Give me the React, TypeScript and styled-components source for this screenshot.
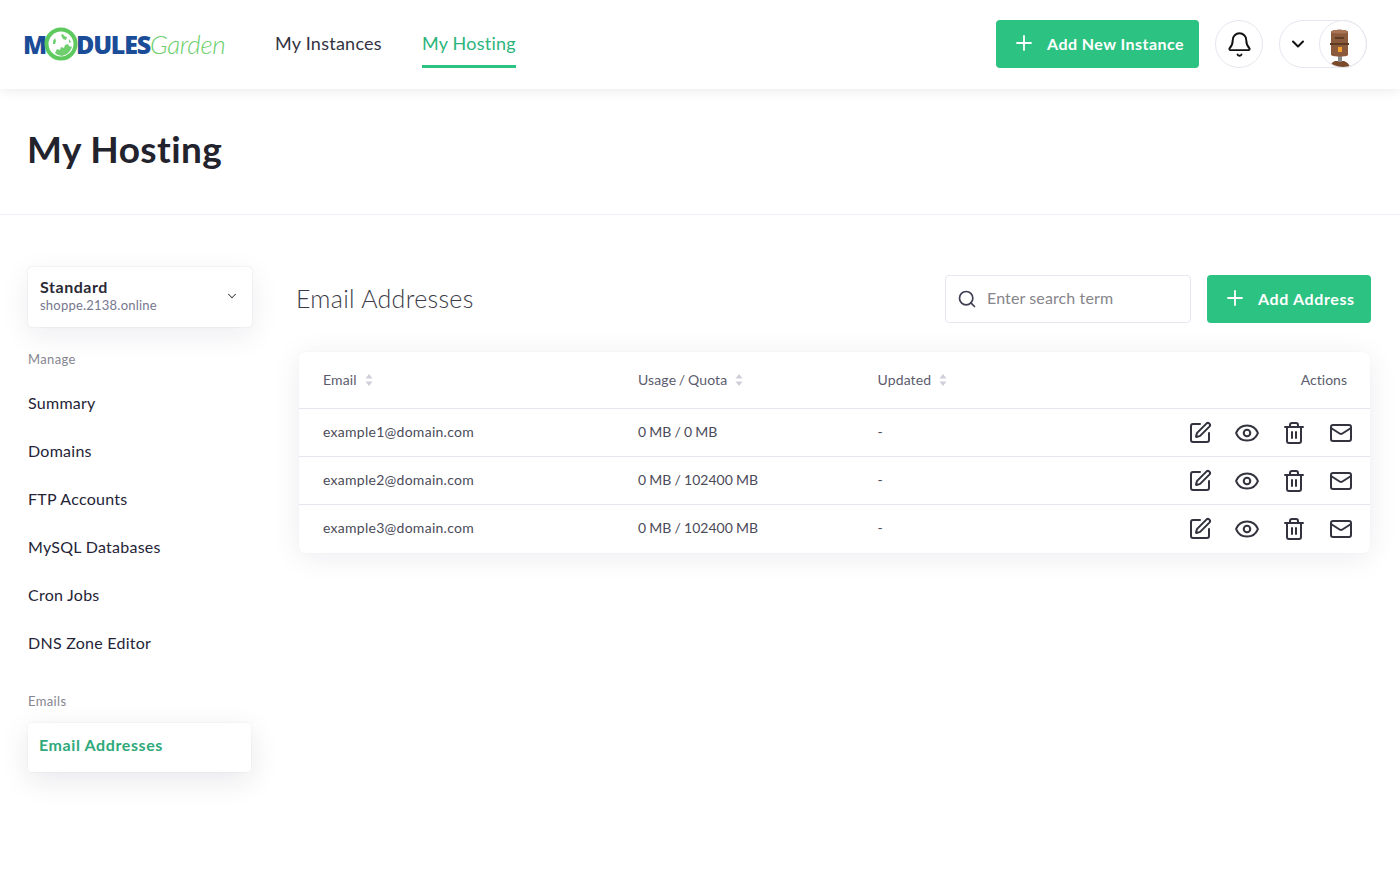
import React from 'react'
import styled, { createGlobalStyle } from 'styled-components'
import { Bell, ChevronDown, Eye, Mail, Plus, Search, SquarePen, Trash2 } from 'lucide-react'

const GlobalStyle = createGlobalStyle`
  html, body {
    margin: 0;
    padding: 0;
    background: #fff;
    font-family: Lato, "Open Sans", sans-serif;
    font-variant-ligatures: none;
    color: #2a2a35;
  }
  * { box-sizing: border-box; }
`

const Page = styled.div`
  min-height: 876px;
`

const Header = styled.header`
  height: 89px;
  display: flex;
  align-items: center;
  padding: 0 33px 1px 23px;
  background: #fff;
  box-shadow: 0 1px 12px rgba(0, 0, 0, 0.09);
  position: relative;
`

const Logo = styled.div`
  width: 202px;
  display: flex;
  align-items: center;
  height: 36px;
`

const LogoCaps = styled.span`
  font-family: "Open Sans", sans-serif;
  font-weight: 800;
  font-size: 25px;
  letter-spacing: -1.2px;
  color: #1a4c97;
  line-height: 1;
`

const LogoThin = styled.span`
  font-family: Lato, sans-serif;
  font-style: italic;
  font-weight: 300;
  font-size: 26px;
  letter-spacing: -0.35px;
  color: #6dcf6d;
  line-height: 1;
`

const LogoGlobe = styled.svg`
  width: 34px;
  height: 34px;
  margin: 0 -2px 0 -2px;
  flex: none;
  position: relative;
`

const Nav = styled.nav`
  display: flex;
  gap: 40px;
  margin-left: 50px;
  height: 48px;
  align-self: flex-end;
  margin-bottom: 20px;
`

const NavLink = styled.a<{ $active?: boolean }>`
  display: flex;
  align-items: center;
  height: 48px;
  font-size: 18px;
  letter-spacing: 0.25px;
  color: ${({ $active }) => ($active ? '#2bb57c' : '#33333f')};
  border-bottom: 3px solid ${({ $active }) => ($active ? '#2cc282' : 'transparent')};
`

const HeaderRight = styled.div`
  margin-left: auto;
  display: flex;
  align-items: center;
  gap: 16px;
`

const PrimaryButton = styled.button<{ $width: number }>`
  width: ${({ $width }) => $width}px;
  height: 48px;
  display: flex;
  align-items: center;
  padding: 0 0 2px 16px;
  gap: 11px;
  border: 0;
  border-radius: 4px;
  background: #2cc282;
  color: #fff;
  font-family: inherit;
  font-weight: 700;
  font-size: 16px;
  letter-spacing: 0.45px;
  white-space: nowrap;
`

const RoundButton = styled.div`
  width: 48px;
  height: 48px;
  border-radius: 50%;
  border: 1px solid #e6e6f0;
  display: flex;
  align-items: center;
  justify-content: center;
  color: #111;
`

const UserPill = styled.div`
  width: 88px;
  height: 48px;
  border-radius: 24px;
  border: 1px solid #e6e6f0;
  display: flex;
  align-items: center;
  justify-content: space-between;
  padding-left: 8px;
  color: #111;
`

const Avatar = styled.div`
  width: 48px;
  height: 48px;
  margin-right: -1px;
  padding-right: 6px;
  border-radius: 50%;
  border: 1px solid #e6e6f0;
  overflow: hidden;
  display: flex;
  align-items: flex-end;
  justify-content: center;
`

const TitleBar = styled.div`
  height: 126px;
  padding-left: 27px;
  display: flex;
  align-items: center;
  border-bottom: 1px solid #eeeef4;
`

const Title = styled.h1`
  margin: 0 0 6px;
  font-size: 37px;
  font-weight: 700;
  letter-spacing: 0.4px;
  color: #23232e;
`

const Content = styled.div`
  display: flex;
  padding: 52px 29px 0 28px;
  gap: 44px;
`

const Sidebar = styled.aside`
  width: 224px;
  flex: none;
`

const SelectCard = styled.div`
  height: 60px;
  border-radius: 4px;
  background: #fff;
  box-shadow: 0 0 2px rgba(30, 30, 60, 0.12), 0 8px 30px rgba(30, 30, 60, 0.08);
  display: flex;
  align-items: center;
  justify-content: space-between;
  padding: 0 13px 2px 12px;
  color: #3a3a4c;
`

const SelectName = styled.div`
  font-size: 16px;
  font-weight: 700;
  line-height: 18px;
  letter-spacing: 0.55px;
  color: #2a2a35;
`

const SelectDomain = styled.div`
  font-size: 13px;
  line-height: 18px;
  letter-spacing: 0.22px;
  color: #77778f;
`

const SideLabel = styled.div<{ $top: number }>`
  margin-top: ${({ $top }) => $top}px;
  height: 18px;
  line-height: 18px;
  font-size: 13px;
  letter-spacing: 0.35px;
  color: #85858f;
`

const SideList = styled.div`
  margin-top: 11px;
  display: flex;
  flex-direction: column;
`

const SideItem = styled.a`
  height: 48px;
  display: flex;
  align-items: center;
  padding-bottom: 2px;
  font-size: 16px;
  letter-spacing: 0.26px;
  color: #242438;
`

const SideActive = styled.a`
  display: flex;
  align-items: center;
  width: 223px;
  height: 49px;
  margin-top: 13px;
  padding: 0 0 7px 11px;
  border-radius: 4px;
  background: #fff;
  font-size: 16px;
  font-weight: 700;
  letter-spacing: 0.6px;
  color: #2fa97a;
  box-shadow: 0 0 2px rgba(30, 30, 60, 0.08), 0 8px 30px rgba(30, 30, 60, 0.1);
`

const Main = styled.main`
  flex: 1;
  min-width: 0;
  padding-top: 8px;
`

const MainHead = styled.div`
  display: flex;
  align-items: center;
  height: 48px;
`

const MainTitle = styled.h2`
  margin: 0 0 3px;
  font-size: 25px;
  font-weight: 300;
  letter-spacing: 0.3px;
  color: #3c3c48;
`

const SearchBox = styled.div`
  margin-left: auto;
  width: 246px;
  height: 48px;
  display: flex;
  align-items: center;
  gap: 7px;
  padding-left: 11px;
  border: 1px solid #e6e6f0;
  border-radius: 4px;
  background: #fff;
  color: #3e3e55;
`

const SearchInput = styled.input`
  flex: 1;
  min-width: 0;
  border: 0;
  outline: 0;
  padding: 0 0 3px 3px;
  font-family: inherit;
  font-size: 16px;
  letter-spacing: 0.12px;
  &::placeholder { color: #85858a; opacity: 1; }
`

const AddButton = styled(PrimaryButton)`
  margin-left: 16px;
  letter-spacing: 0.62px;
`

const TableCard = styled.section`
  margin: 29px 1px 0 3px;
  border-radius: 6px;
  background: #fff;
  box-shadow: 0 0 1px rgba(30, 30, 60, 0.08), 0 4px 30px rgba(30, 30, 60, 0.08);
`

const Row = styled.div<{ $head?: boolean; $last?: boolean }>`
  display: grid;
  grid-template-columns: 315px 239.5px 1fr auto;
  align-items: center;
  height: ${({ $head }) => ($head ? 57 : 48)}px;
  padding: 0 17px 0 24px;
  font-size: 14px;
  color: ${({ $head }) => ($head ? '#5c5c6e' : '#4b4b5a')};
  border-bottom: 1px solid ${({ $last }) => ($last ? 'transparent' : '#e6e6f0')};
`

const HeadCell = styled.div`
  display: flex;
  align-items: center;
  gap: 8px;
  margin-bottom: 1px;
  letter-spacing: 0.12px;
  word-spacing: -1px;
`

const EmailCell = styled.div`
  margin-bottom: 2px;
  letter-spacing: 0.27px;
`

const TextCell = styled.div`
  margin-bottom: 2px;
  word-spacing: -0.4px;
`

const ActionsHead = styled.div`
  padding-right: 6px;
  margin-bottom: 1px;
  text-align: right;
`

const Actions = styled.div`
  display: flex;
  align-items: center;
  gap: 23px;
  color: #33333f;
`

const EyeIcon = styled(Eye)`
  margin: 0 -1px;
`

const SortCaret = () => (
  <svg width="8" height="14" viewBox="0 0 8 14" fill="#cfcfdc">
    <path d="M4 1 7.5 5.5H.5z" />
    <path d="M4 13 .5 8.5h7z" />
  </svg>
)

const menu = ['Summary', 'Domains', 'FTP Accounts', 'MySQL Databases', 'Cron Jobs', 'DNS Zone Editor']

const emails = [
  { email: 'example1@domain.com', usage: '0 MB / 0 MB' },
  { email: 'example2@domain.com', usage: '0 MB / 102400 MB' },
  { email: 'example3@domain.com', usage: '0 MB / 102400 MB' },
]

export default function App() {
  return (
    <Page>
      <GlobalStyle />
      <Header>
        <Logo>
          <LogoCaps>M</LogoCaps>
          <LogoGlobe viewBox="0 0 34 34">
            <circle cx="17" cy="17" r="14.5" fill="#fff" stroke="#5ec95e" strokeWidth="4" />
            <path d="M11 26l2-4 3 1 1-3 3 1 1-3 3-1 1 2 3 1-2 4-3 3-5 2-4-1z" fill="#6fcf6f" />
            <path d="M17 8l2-1 1 2 3 1-1 3-3-1-1-2zM9 14l2-3 1 3-1 3-2 0zM25 12l2 3-2 1z" fill="#6fcf6f" />
          </LogoGlobe>
          <LogoCaps>DULES</LogoCaps>
          <LogoThin>Garden</LogoThin>
        </Logo>
        <Nav>
          <NavLink>My Instances</NavLink>
          <NavLink $active>My Hosting</NavLink>
        </Nav>
        <HeaderRight>
          <PrimaryButton $width={203}>
            <Plus size={24} strokeWidth={1.8} />
            Add New Instance
          </PrimaryButton>
          <RoundButton>
            <Bell size={27} strokeWidth={1.7} />
          </RoundButton>
          <UserPill>
            <ChevronDown size={20} strokeWidth={2.4} />
            <Avatar>
              <svg width="30" height="38" viewBox="0 0 30 38">
                <path d="M5 38c1-3 2-5 5-6h9c3 1 5 3 6 6z" fill="#7a4a2a" />
                <rect x="13" y="26" width="4" height="7" fill="#8a8a8a" />
                <path d="M6 3c0-3 17-3 17 0v23c-1 2-15 2-17 0z" fill="#8b5a3c" />
                <path d="M6 3c0-3 17-3 17 0 0 2-17 2-17 0z" fill="#a87455" />
                <rect x="10" y="8" width="9" height="2" fill="#5d3a24" />
                <rect x="5" y="14" width="19" height="2" fill="#5d3a24" />
                <rect x="13" y="18" width="4" height="5" fill="#f2a02e" />
              </svg>
            </Avatar>
          </UserPill>
        </HeaderRight>
      </Header>

      <TitleBar>
        <Title>My Hosting</Title>
      </TitleBar>

      <Content>
        <Sidebar>
          <SelectCard>
            <div>
              <SelectName>Standard</SelectName>
              <SelectDomain>shoppe.2138.online</SelectDomain>
            </div>
            <ChevronDown size={14} strokeWidth={1.8} />
          </SelectCard>
          <SideLabel $top={23}>Manage</SideLabel>
          <SideList>
            {menu.map((item) => (
              <SideItem key={item}>{item}</SideItem>
            ))}
          </SideList>
          <SideLabel $top={25}>Emails</SideLabel>
          <SideActive>Email Addresses</SideActive>
        </Sidebar>

        <Main>
          <MainHead>
            <MainTitle>Email Addresses</MainTitle>
            <SearchBox>
              <Search size={20} strokeWidth={2} />
              <SearchInput placeholder="Enter search term" />
            </SearchBox>
            <AddButton $width={164}>
              <Plus size={24} strokeWidth={1.8} />
              Add Address
            </AddButton>
          </MainHead>

          <TableCard>
            <Row $head>
              <HeadCell>Email <SortCaret /></HeadCell>
              <HeadCell>Usage / Quota <SortCaret /></HeadCell>
              <HeadCell>Updated <SortCaret /></HeadCell>
              <ActionsHead>Actions</ActionsHead>
            </Row>
            {emails.map((row, i) => (
              <Row key={row.email} $last={i === emails.length - 1}>
                <EmailCell>{row.email}</EmailCell>
                <TextCell>{row.usage}</TextCell>
                <TextCell>-</TextCell>
                <Actions>
                  <SquarePen size={24} strokeWidth={2} />
                  <EyeIcon size={26} strokeWidth={1.9} />
                  <Trash2 size={24} strokeWidth={2} />
                  <Mail size={24} strokeWidth={2} />
                </Actions>
              </Row>
            ))}
          </TableCard>
        </Main>
      </Content>
    </Page>
  )
}
